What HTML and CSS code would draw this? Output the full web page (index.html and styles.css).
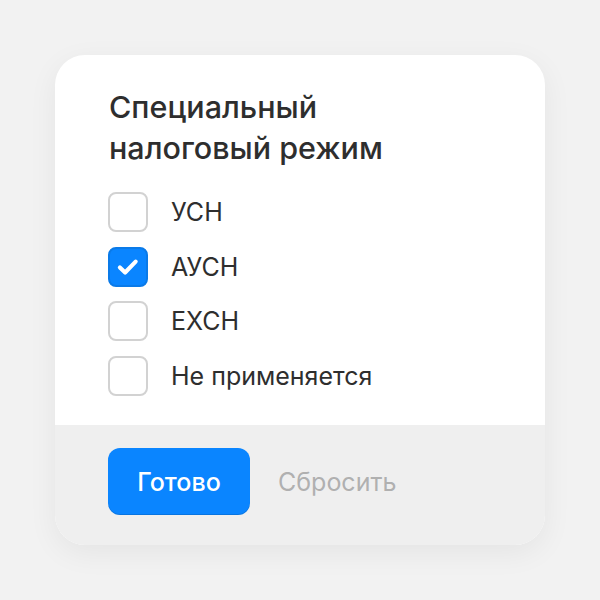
FILE: index.html
```html
<!DOCTYPE html>
<html lang="ru">
<head>
<meta charset="utf-8">
<link rel="stylesheet" href="styles.css">
</head>
<body>
<div class="card">
  <div class="body">
    <h1 class="title">Специальный<br>налоговый режим</h1>
    <ul class="options">
      <li class="option"><span class="box"></span><span class="label">УСН</span></li>
      <li class="option"><span class="box checked"><svg viewBox="0 0 40 40" width="40" height="40"><path d="M11 20.5l5.8 5.6L28.5 14" fill="none" stroke="#fff" stroke-width="4.6" stroke-linecap="round" stroke-linejoin="round"/></svg></span><span class="label">АУСН</span></li>
      <li class="option"><span class="box"></span><span class="label">ЕХСН</span></li>
      <li class="option"><span class="box"></span><span class="label">Не применяется</span></li>
    </ul>
  </div>
  <div class="footer">
    <button class="btn-primary">Готово</button>
    <button class="btn-link">Сбросить</button>
  </div>
</div>
</body>
</html>
```
FILE: styles.css
```css
html, body { margin: 0; padding: 0; }
body {
  width: 600px; height: 600px;
  background: #f2f2f2;
  font-family: "Inter", "Liberation Sans", sans-serif;
  padding: 55px;
  box-sizing: border-box;
}
.card {
  width: 490px; height: 490px;
  background: #fff;
  border-radius: 30px;
  overflow: hidden;
  box-shadow: 0 8px 30px rgba(0,0,0,0.06);
  display: flex; flex-direction: column;
}
.body {
  flex: 1;
  padding: 31px 53px 0 54px;
}
.title {
  margin: 0;
  font-size: 30.5px;
  font-weight: 500;
  line-height: 41px;
  color: #2e2e2e;
}
.options {
  list-style: none; margin: 0; padding: 0;
  margin-top: 24px;
  display: flex; flex-direction: column; gap: 14.7px;
}
.option { display: flex; align-items: center; height: 40px; }
.box {
  width: 40px; height: 40px; box-sizing: border-box;
  border: 2px solid #d2d2d2; border-radius: 8px;
  background: #fff;
  display: flex; align-items: center; justify-content: center;
  margin-left: -1px;
}
.box.checked { background: #0a85ff; border-color: #0a7ae8; }
.box svg { display: block; }
.label {
  margin-left: 23px;
  font-size: 25px;
  color: #2e2e2e;
}
.footer {
  height: 120px;
  background: #efefef;
  display: flex; align-items: center;
  padding: 0 53px 7px;
  box-sizing: border-box;
}
.btn-primary {
  width: 142px; height: 67px;
  border: none; border-radius: 12px;
  background: #0a85ff;
  box-shadow: inset 0 -1px 0 rgba(0,0,0,0.12);
  color: #fff;
  font-family: inherit;
  font-size: 25px; font-weight: 500;
  padding: 0;
}
.btn-link {
  margin-left: 28px;
  background: none; border: none; padding: 0;
  font-family: inherit;
  font-size: 25px; color: #b0b0b0;
}
```
